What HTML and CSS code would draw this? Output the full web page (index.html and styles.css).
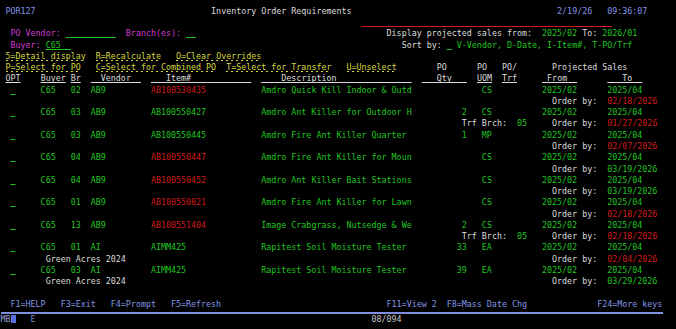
FILE: index.html
```html
<!DOCTYPE html>
<html lang="en">
<head>
<meta charset="utf-8">
<title>POR127 Inventory Order Requirements</title>
<link rel="stylesheet" href="styles.css">
</head>
<body>
<div class="screen">
<div class="row"> <span class="b">POR127</span>                                   <span class="w">Inventory Order Requirements</span>                                         <span class="b">2/19/26   09:36:07</span></div>
<div class="row">                                                                        <span class="r u">                                                  </span></div>
<div class="row">  <span class="m">PO Vendor:</span> <span class="u">          </span>  <span class="m">Branch(es):</span> <span class="u">  </span>                                      <span class="w">Display projected sales from:</span>  2025/02 <span class="w">To:</span> 2026/01</div>
<div class="row">  <span class="m">Buyer:</span> <span class="u">C65  </span>                                                                  <span class="w">Sort by:</span> <span class="u"> </span> V-Vendor, D-Date, I-Item#, T-PO/Trf</div>
<div class="row y"> <span class="cs">5=Detail display</span>  <span class="cs">R=Recalculate</span>   <span class="cs">O=Clear Overrides</span></div>
<div class="row y"> <span class="cs">P=Select for PO</span>   <span class="cs">C=Select for Combined PO</span>  <span class="cs">T=Select for Transfer</span>   <span class="cs">U=Unselect</span>        <span class="w">PO      PO   PO/       Projected Sales</span></div>
<div class="row w"> <span class="u">OPT</span>    <span class="u">Buyer</span> <span class="u">Br</span>  <span class="u">  Vendor  </span>  <span class="u">   Item#            </span>  <span class="u">    Description               </span>  <span class="u">   Qty   </span>  <span class="u">UOM</span>  <span class="u">Trf</span>     <span class="u"> From  </span>      <span class="u">   To  </span></div>
<div class="row">  <span class="u"> </span>     C65   02  AB9         <span class="r">AB100530435</span>           Amdro Quick Kill Indoor &amp; Outd              CS          2025/02      2025/04</div>
<div class="row">                                                                                                              <span class="w">Order by:</span>  <span class="r">02/18/2026</span></div>
<div class="row">  <span class="u"> </span>     C65   03  AB9         AB100550427           Amdro Ant Killer for Outdoor H          2   CS          2025/02      2025/04</div>
<div class="row">                                                                                            <span class="w">Trf Brch:</span>  05     <span class="w">Order by:</span>  <span class="r">01/27/2026</span></div>
<div class="row">  <span class="u"> </span>     C65   03  AB9         AB100550445           Amdro Fire Ant Killer Quarter           1   MP          2025/02      2025/04</div>
<div class="row">                                                                                                              <span class="w">Order by:</span>  <span class="r">02/07/2026</span></div>
<div class="row">  <span class="u"> </span>     C65   04  AB9         <span class="r">AB100550447</span>           Amdro Fire Ant Killer for Moun              CS          2025/02      2025/04</div>
<div class="row">                                                                                                              <span class="w">Order by:</span>  03/19/2026</div>
<div class="row">  <span class="u"> </span>     C65   04  AB9         <span class="r">AB100550452</span>           Amdro Ant Killer Bait Stations              CS          2025/02      2025/04</div>
<div class="row">                                                                                                              <span class="w">Order by:</span>  03/19/2026</div>
<div class="row">  <span class="u"> </span>     C65   01  AB9         <span class="r">AB100550821</span>           Amdro Fire Ant Killer for Lawn              CS          2025/02      2025/04</div>
<div class="row">                                                                                                              <span class="w">Order by:</span>  <span class="r">02/18/2026</span></div>
<div class="row">  <span class="u"> </span>     C65   13  AB9         <span class="r">AB100551404</span>           Image Crabgrass, Nutsedge &amp; We          2   CS          2025/02      2025/04</div>
<div class="row">                                                                                            <span class="w">Trf Brch:</span>  05     <span class="w">Order by:</span>  <span class="r">02/18/2026</span></div>
<div class="row">  <span class="u"> </span>     C65   01  AI          AIMM425               Rapitest Soil Moisture Tester          33   EA          2025/02      2025/04</div>
<div class="row">         <span class="w">Green Acres 2024</span>                                                                                     <span class="w">Order by:</span>  <span class="r">02/04/2026</span></div>
<div class="row">  <span class="u"> </span>     C65   03  AI          AIMM425               Rapitest Soil Moisture Tester          39   EA          2025/02      2025/04</div>
<div class="row">         <span class="w">Green Acres 2024</span>                                                                                     <span class="w">Order by:</span>  03/29/2026</div>
<div class="row"> </div>
<div class="row b">  F1=HELP   F3=Exit   F4=Prompt   F5=Refresh                                 F11=View 2  F8=Mass Date Chg              F24=More keys</div>
<div class="oia"><span class="oia-m">MB</span><span class="cursor"></span>   <span class="oia-e">E</span>                                                                   <span class="oia-c">08/094</span></div>
</div>
</body>
</html>
```
FILE: styles.css
```css
html, body {
  margin: 0;
  padding: 0;
  background: #000;
}
body {
  width: 676px;
  height: 329px;
  overflow: hidden;
}
.screen {
  padding: 5.8px 0 0 0.5px;
  font-family: "DejaVu Sans Mono", monospace;
  font-size: 8.33px;
  color: #21c421;
}
.row {
  height: 11.27px;
  line-height: 11.27px;
  white-space: pre;
}
.r { color: #d21a1a; }
.y { color: #d6d63c; }
.m { color: #d03cd0; }
.w { color: #dcdcdc; }
.b { color: #8494e6; }
.u {
  text-decoration: underline;
  text-decoration-thickness: 1px;
  text-underline-offset: 1px;
}
.cs {
  background-image: repeating-linear-gradient(90deg, currentColor 0 2px, transparent 2px 5.014px);
  background-size: 100% 1px;
  background-repeat: no-repeat;
  background-position: 0 100%;
}
.oia {
  margin-top: 2px;
  width: 662px;
  height: 15px;
  border-top: 2px solid #7f8fe0;
  line-height: 11px;
  white-space: pre;
  color: #c8c8c8;
}
.oia-m { color: #9aa6d8; }
.oia-e { color: #7d8ad8; }
.oia-c { color: #c8c8c8; }
.cursor {
  display: inline-block;
  width: 5.014px;
  height: 8px;
  background: #5a6fe0;
  vertical-align: -1px;
}
```
